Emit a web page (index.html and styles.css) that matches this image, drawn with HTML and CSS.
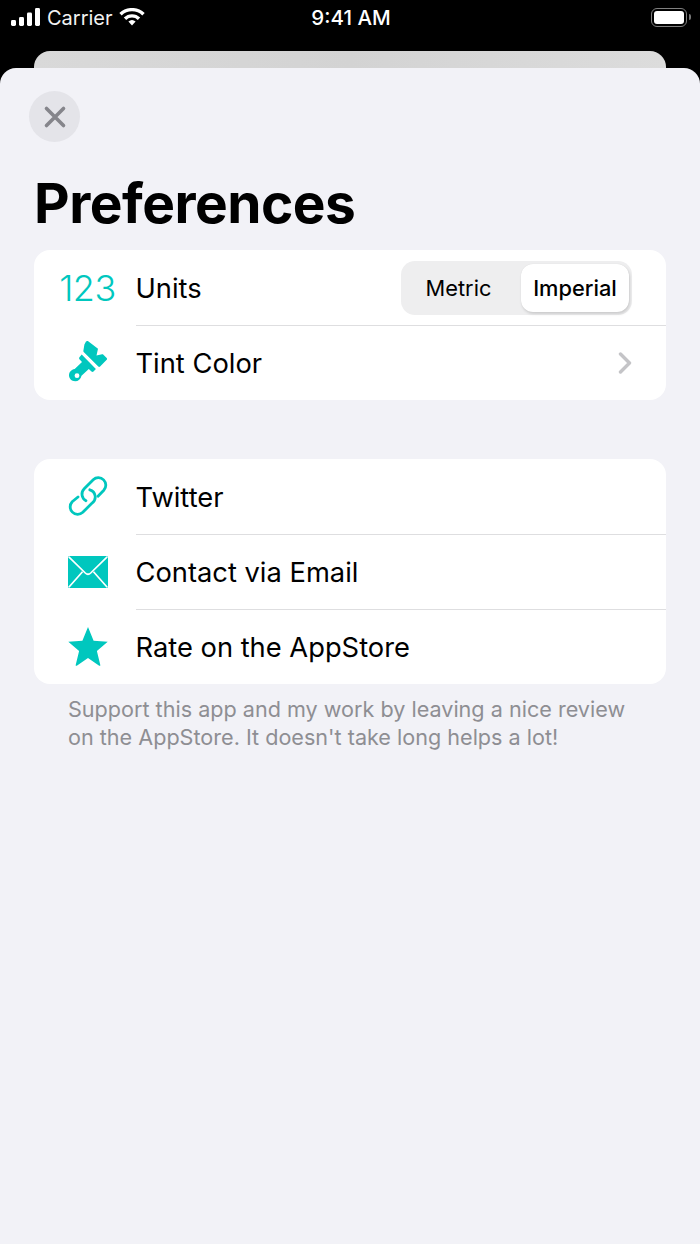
FILE: index.html
```html
<!DOCTYPE html>
<html lang="en">
<head>
<meta charset="utf-8">
<title>Preferences</title>
<link rel="stylesheet" href="styles.css">
</head>
<body>
<div class="screen">
  <header class="status">
    <div class="status-left">
      <svg class="signal" width="30" height="18" viewBox="0 0 30 18"><rect x="0" y="12" width="5" height="6" rx="1.4"/><rect x="8" y="9" width="5" height="9" rx="1.4"/><rect x="16" y="4.5" width="5" height="13.5" rx="1.4"/><rect x="24" y="0" width="5" height="18" rx="1.4"/></svg>
      <span class="carrier">Carrier</span>
      <svg class="wifi" width="26" height="18" viewBox="0 0 26 18"><path class="wifi-arc" d="M1.500 6.300a16.500 16.500 0 0 1 23 0"/><path class="wifi-arc" d="M6 10.700a10 10 0 0 1 14 0"/><path class="wifi-dot" d="M9.400 13.600a5.400 5.400 0 0 1 7.200 0L13 17.600z"/></svg>
    </div>
    <div class="status-time">9:41 AM</div>
    <div class="status-right">
      <div class="battery"><div class="battery-fill"></div></div>
      <div class="battery-cap"></div>
    </div>
  </header>
  <div class="back-card"></div>
  <main class="sheet">
    <button class="close" aria-label="Close">
      <svg width="24" height="24" viewBox="0 0 24 24"><path d="M3.500 3.500l17 17M20.500 3.500l-17 17"/></svg>
    </button>
    <h1 class="title">Preferences</h1>
    <section class="card">
      <div class="row">
        <div class="icon icon-num">123</div>
        <div class="row-body">
          <span class="label">Units</span>
          <div class="segment">
            <span class="seg seg-off">Metric</span>
            <span class="seg seg-on">Imperial</span>
          </div>
        </div>
      </div>
      <div class="row">
        <div class="icon">
          <svg width="50" height="50" viewBox="0 2 50 50"><path class="fill" d="M23 5.500c.6-.7 1.500-.8 2.200-.3L35 12.800l-1.500 6.700 5.600-1.200c.5-.1 1 0 1.300.4l3.300 3.300c.5.500.5 1.300 0 1.800l-6.600 6.800c-.5.500-1.300.5-1.800 0L20.700 16.100c-.4-.4-.5-1-.3-1.500l1-6z"/><path class="fill" d="M18.700 18.500l14.200 14.400-2.400 2.700c-.6.600-1.400.6-2 0l-2.700-2.700-7.300 6.900c-.7 3.500-3.200 5.500-6.300 5.500-3.700 0-6.200-2.800-6.200-6 0-3.100 2.300-5.800 5.700-6.300l7.300-7.100-2.600-2.700c-.5-.6-.5-1.300 0-1.900z"/><circle class="hole" cx="14" cy="39.700" r="2.400"/></svg>
        </div>
        <div class="row-body">
          <span class="label">Tint Color</span>
          <svg class="chevron" width="14" height="22" viewBox="0 0 14 22"><path d="M2.500 2l9 9-9 9"/></svg>
        </div>
      </div>
    </section>
    <section class="card card-links">
      <div class="row">
        <div class="icon">
          <svg width="50" height="50" viewBox="0 0 50 50"><g class="stroke"><path d="M35 24.200l5.800-5.900a7.500 7.500 0 0 0-10.600-10.600l-9 9a7.500 7.500 0 0 0 1.800 12"/><path d="M15 25l-5.800 4.700a7.500 7.500 0 0 0 10.600 10.600l9-9a7.500 7.500 0 0 0-2-13.500"/></g></svg>
        </div>
        <div class="row-body"><span class="label">Twitter</span></div>
      </div>
      <div class="row">
        <div class="icon">
          <svg width="40" height="32" viewBox="0 0 40 32"><rect class="fill" width="40" height="32" rx="1.500"/><path class="gap" d="M.8.800L17.300 17c1.600 1.500 3.800 1.500 5.400 0L39.200.800M.8 31.200l13.700-15.500M39.200 31.200L25.500 15.700"/></svg>
        </div>
        <div class="row-body"><span class="label">Contact via Email</span></div>
      </div>
      <div class="row">
        <div class="icon">
          <svg width="42" height="40" viewBox="0 1 42 40"><path class="fill" d="M21 1l5.600 13.700 14.100 1-10.800 9.200 3.400 14c.2.700-.5 1.200-1.100.8L21 32.100l-11.200 7.600c-.6.400-1.300-.1-1.100-.8l3.400-14L1.300 15.700l14.100-1L21 1z"/></svg>
        </div>
        <div class="row-body"><span class="label">Rate on the AppStore</span></div>
      </div>
    </section>
    <p class="footnote">Support this app and my work by leaving a nice review on the AppStore. It doesn't take long helps a lot!</p>
  </main>
</div>
</body>
</html>
```
FILE: styles.css
```css
* { box-sizing: border-box; }
html, body { margin: 0; padding: 0; }
body { background: #000; font-family: Inter, "Liberation Sans", sans-serif; }
.screen { width: 700px; height: 1244px; display: flex; flex-direction: column; background: #000; overflow: hidden; }

.status { height: 51px; flex: none; display: grid; grid-template-columns: 1fr auto 1fr; align-items: start; padding: 6px 9px 0 11px; color: #fff; }
.status-left { display: flex; align-items: center; height: 24px; }
.signal { fill: #fff; margin-top: -2px; }
.carrier { font-size: 20px; margin-left: 6px; color: #f2f2f2; }
.wifi { margin-left: 6px; margin-top: -2px; }
.wifi-arc { fill: none; stroke: #fff; stroke-width: 3.400; }
.wifi-dot { fill: #fff; }
.status-time { font-size: 20.500px; font-weight: 500; line-height: 24px; }
.status-right { display: flex; align-items: center; justify-content: flex-end; height: 24px; margin-top: -1px; }
.battery { width: 36px; height: 19px; border: 1.500px solid #808080; border-radius: 6px; padding: 2px; }
.battery-fill { width: 100%; height: 100%; background: #fff; border-radius: 3px; }
.battery-cap { width: 2.500px; height: 6px; background: #777; border-radius: 0 2px 2px 0; margin-left: 2px; }

.back-card { height: 17px; flex: none; margin: 0 34px; background: linear-gradient(90deg, #d9d9d9, #d3d3d3 50%, #dcdcdc); border-radius: 16px 16px 0 0; }
.sheet { flex: 1; background: #f2f2f7; border-radius: 16px 16px 0 0; padding: 23px 34px 0; display: flex; flex-direction: column; align-items: stretch; }

.close { width: 51px; height: 51px; margin-left: -5px; padding: 0; border: 0; border-radius: 50%; background: #e4e4e9; display: flex; align-items: center; justify-content: center; flex: none; }
.close path { fill: none; stroke: #85858b; stroke-width: 3.600; stroke-linecap: round; }

.title { margin: 29px 0 14px; font-size: 55px; line-height: 65px; font-weight: 700; letter-spacing: -0.5px; color: #000; }

.card { background: #fff; border-radius: 16px; overflow: hidden; flex: none; }
.card-links { margin-top: 59px; }
.row { display: flex; align-items: stretch; height: 75px; }
.row + .row .row-body { border-top: 1px solid #dedee0; }
.icon { width: 102px; flex: none; display: flex; align-items: center; justify-content: center; padding-left: 5px; }
.fill { fill: #00c7be; }
.hole { fill: #fff; }
.gap { fill: none; stroke: #fff; stroke-width: 1.700; }
.stroke path { fill: none; stroke: #00c7be; stroke-width: 2.800; stroke-linecap: round; }
.icon-num { font-size: 36px; font-weight: 300; color: #00c7be; letter-spacing: -0.5px; }
.row-body { flex: 1; display: flex; align-items: center; justify-content: space-between; min-width: 0; }
.label { font-size: 27.300px; color: #000; margin-left: -0.5px; }
.row:first-child .label { margin-top: 2px; }

.segment { width: 231px; height: 54px; margin-right: 34px; border-radius: 14px; background: #eeeeef; display: flex; align-items: center; padding: 3px; font-size: 21.800px; color: #000; }
.seg { display: flex; align-items: center; justify-content: center; height: 48px; }
.seg-off { flex: 1; font-weight: 400; padding-right: 8px; }
.seg-on { width: 108px; background: #fff; border-radius: 12px; font-weight: 500; box-shadow: 1px 2px 3px rgba(0,0,0,0.14), 0 0 1px rgba(0,0,0,0.1); }

.chevron { margin-right: 34px; }
.chevron path { fill: none; stroke: #c4c4c7; stroke-width: 3.400; stroke-linecap: round; stroke-linejoin: round; }

.footnote { margin: 11px 30px 0 34px; font-size: 21.600px; line-height: 28px; color: #8e8e93; }
```
